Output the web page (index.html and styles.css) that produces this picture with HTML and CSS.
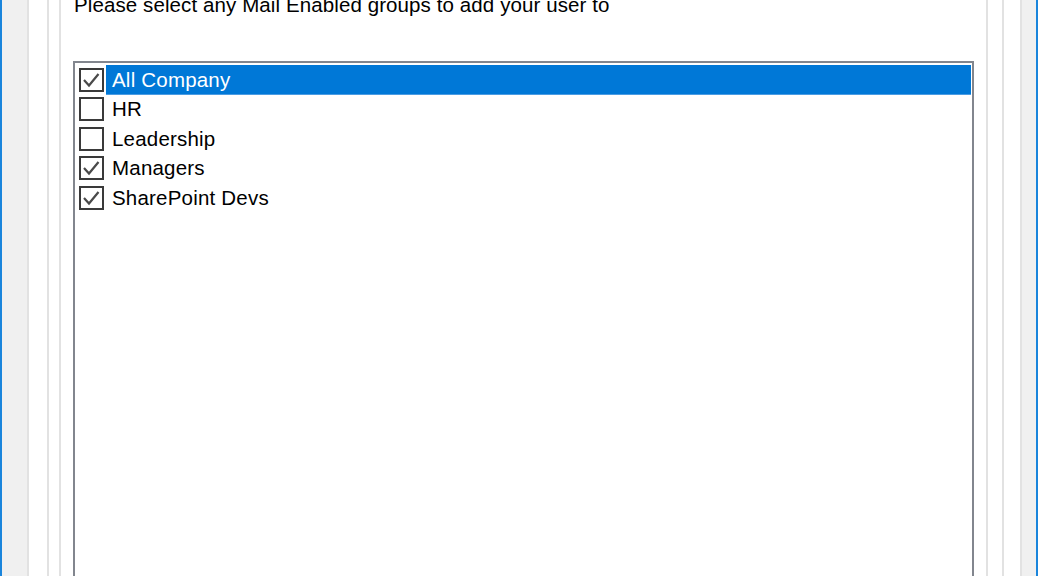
FILE: index.html
```html
<!DOCTYPE html>
<html lang="en">
<head>
    <meta charset="UTF-8">
    <title>Mail Enabled Groups</title>
    <link rel="stylesheet" href="styles.css">
</head>
<body>
    <div class="window">
        <div class="frame frame-outer">
            <div class="frame frame-mid">
                <div class="frame frame-inner">
                    <p class="prompt">Please select any Mail Enabled groups to add your user to</p>

                    <!-- Lista de grupos -->
                    <div class="group-list">
                        <div class="group-row selected">
                            <span class="check checked"><svg viewBox="0 0 21 20"><path d="M3 10 L8 15.5 L17.5 4"/></svg></span>
                            <span class="group-name">All Company</span>
                        </div>
                        <div class="group-row">
                            <span class="check"></span>
                            <span class="group-name">HR</span>
                        </div>
                        <div class="group-row">
                            <span class="check"></span>
                            <span class="group-name">Leadership</span>
                        </div>
                        <div class="group-row">
                            <span class="check checked"><svg viewBox="0 0 21 20"><path d="M3 10 L8 15.5 L17.5 4"/></svg></span>
                            <span class="group-name">Managers</span>
                        </div>
                        <div class="group-row">
                            <span class="check checked"><svg viewBox="0 0 21 20"><path d="M3 10 L8 15.5 L17.5 4"/></svg></span>
                            <span class="group-name">SharePoint Devs</span>
                        </div>
                    </div>
                </div>
            </div>
        </div>
    </div>
</body>
</html>
```

FILE: styles.css
```css
:root {
    --acento: #1a85dc;
    --gris: #f0f0f0;
    --linea: #e2e2e2;
    --seleccion: #0078d7;
    --borde-lista: #82868e;
}

body {
    margin: 0;
    padding: 0;
    overflow: hidden;
    font-family: 'Liberation Sans', Arial, sans-serif;
}

.window {
    height: 576px;
    box-sizing: border-box;
    border-left: 2px solid var(--acento);
    border-right: 2px solid var(--acento);
    background: var(--gris);
    padding: 0 14px 0 25px;
}

.frame {
    height: 100%;
    box-sizing: border-box;
    background: #ffffff;
    border-left: 2px solid var(--linea);
    border-right: 2px solid var(--linea);
}

.frame-outer {
    padding: 0 16px 0 18px;
}

.frame-mid {
    padding: 0 14px 0 10px;
}

.frame-inner {
    padding: 0 12px 0 12px;
    overflow: hidden;
}

.prompt {
    margin: -7px 0 0 1px;
    font-size: 20.5px;
    line-height: 24px;
    letter-spacing: 0.1px;
    color: #000;
}

.group-list {
    margin-top: 44px;
    height: 560px;
    border: 2px solid var(--borde-lista);
    padding: 2px 1px 0 4px;
}

.group-row {
    display: flex;
    align-items: center;
    height: 29.5px;
}

.check {
    width: 21px;
    height: 20px;
    border: 2px solid #3a3a3a;
    background: #fff;
    flex-shrink: 0;
    display: flex;
}

.check svg {
    width: 100%;
    height: 100%;
    fill: none;
    stroke: #4a4a4a;
    stroke-width: 2.2;
}

.group-name {
    flex: 1;
    height: 100%;
    display: flex;
    align-items: center;
    margin-left: 2px;
    padding-left: 6px;
    font-size: 20.5px;
    letter-spacing: 0.2px;
    color: #000;
}

.selected .group-name {
    background: var(--seleccion);
    color: #fff;
    box-shadow: inset 0 -1px 0 #4b9ce3;
}
```
